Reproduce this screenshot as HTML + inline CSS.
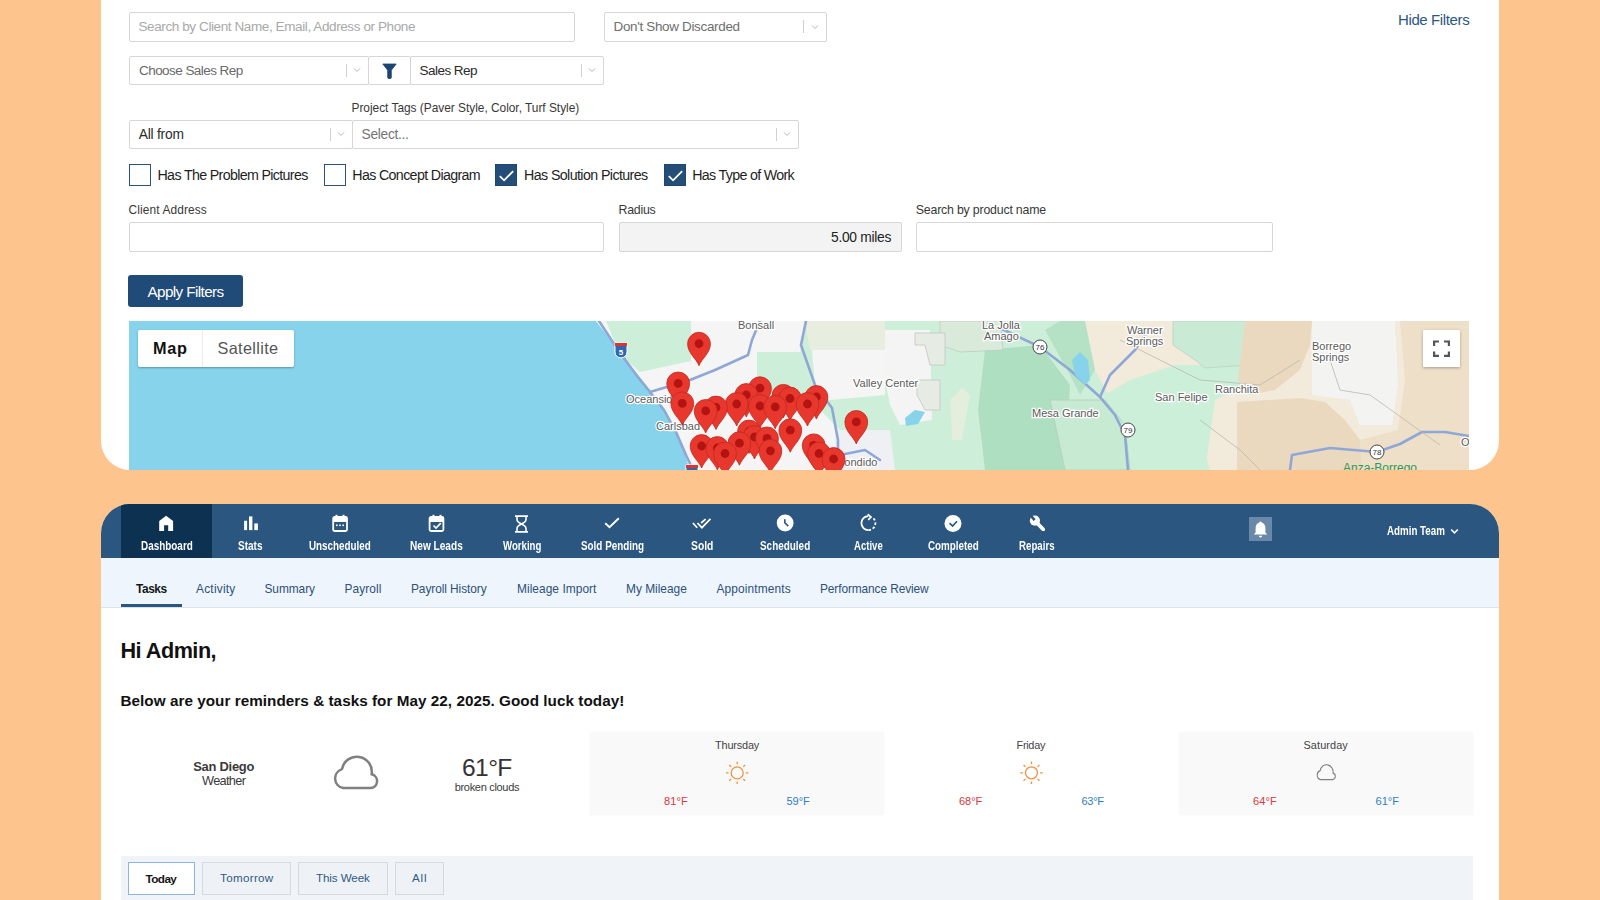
<!DOCTYPE html>
<html><head><meta charset="utf-8"><title>Dashboard</title>
<style>
*{box-sizing:border-box;margin:0;padding:0}
html,body{width:1600px;height:900px;overflow:hidden;background:#FDC48E;font-family:"Liberation Sans",sans-serif}
.a{position:absolute}
.card{position:absolute;background:#fff;overflow:hidden}
.inp{position:absolute;border:1px solid #D6D6D6;background:#fff;border-radius:2px}
.sep{position:absolute;width:1px;background:#D0D0D0}
.cb{position:absolute;width:22px;height:22px;border:1.6px solid #2C5278;background:#fff}
.cb.on{background:#244D78;border-color:#1F4670}
</style></head><body>
<div class="card" style="left:101px;top:-40px;width:1398px;height:510px;border-radius:0 0 29px 29px"></div>
<div class="card" style="left:101px;top:504px;width:1398px;height:440px;border-radius:29px 29px 0 0">
<div class="a" style="left:0;top:0;width:1398px;height:54px;background:#2B5680"></div>
<div class="a" style="left:20px;top:0;width:91px;height:54px;background:#0C3151"></div>
<div class="a" style="left:0;top:54px;width:1398px;height:50px;background:#EEF5FD;border-bottom:1px solid #DAE2EA"></div>
<div class="a" style="left:20px;top:100px;width:61px;height:3px;background:#2B5680"></div>
</div>
<div class="inp" style="left:129px;top:12px;width:446px;height:30px"></div>
<div class="inp" style="left:604px;top:12px;width:223px;height:30px"></div>
<div class="sep" style="left:803px;top:20px;height:13px"></div><svg class="a" style="left:811px;top:24px" width="8" height="6" viewBox="0 0 8 6"><path d="M1 1.5L4 4.5L7 1.5" fill="none" stroke="#B5B5B5" stroke-width="1"/></svg>
<div class="inp" style="left:129px;top:56px;width:240px;height:29px"></div>
<div class="sep" style="left:346px;top:64px;height:13px"></div><svg class="a" style="left:353px;top:67px" width="8" height="6" viewBox="0 0 8 6"><path d="M1 1.5L4 4.5L7 1.5" fill="none" stroke="#B5B5B5" stroke-width="1"/></svg>
<div class="inp" style="left:368px;top:56px;width:43px;height:29px"></div>
<svg class="a" style="left:382px;top:62.5px" width="15" height="16" viewBox="0 0 15 16"><path d="M0.8 1H14.2L9.3 7.2V14.6Q9.3 15.5 8.4 15.5H6.6Q5.7 15.5 5.7 14.6V7.2Z" fill="#1C4574" stroke="#1C4574" stroke-width="0.8" stroke-linejoin="round"/></svg>
<div class="inp" style="left:410px;top:56px;width:194px;height:29px"></div>
<div class="sep" style="left:581px;top:64px;height:13px"></div><svg class="a" style="left:588px;top:67px" width="8" height="6" viewBox="0 0 8 6"><path d="M1 1.5L4 4.5L7 1.5" fill="none" stroke="#B5B5B5" stroke-width="1"/></svg>
<div class="inp" style="left:129px;top:120px;width:224px;height:29px"></div>
<div class="sep" style="left:330px;top:128px;height:13px"></div><svg class="a" style="left:337px;top:131px" width="8" height="6" viewBox="0 0 8 6"><path d="M1 1.5L4 4.5L7 1.5" fill="none" stroke="#B5B5B5" stroke-width="1"/></svg>
<div class="inp" style="left:352px;top:120px;width:447px;height:29px"></div>
<div class="sep" style="left:776px;top:128px;height:13px"></div><svg class="a" style="left:783px;top:131px" width="8" height="6" viewBox="0 0 8 6"><path d="M1 1.5L4 4.5L7 1.5" fill="none" stroke="#B5B5B5" stroke-width="1"/></svg>
<div class="cb" style="left:129px;top:164px"></div>
<div class="cb" style="left:324px;top:164px"></div>
<div class="cb on" style="left:495px;top:164px"><svg width="22" height="22" viewBox="0 0 22 22" style="position:absolute;left:-1.6px;top:-1.6px"><path d="M5.8 13.1L10.1 17.3L19.2 8.1" fill="none" stroke="#fff" stroke-width="1.8"/></svg></div>
<div class="cb on" style="left:664px;top:164px"><svg width="22" height="22" viewBox="0 0 22 22" style="position:absolute;left:-1.6px;top:-1.6px"><path d="M5.8 13.1L10.1 17.3L19.2 8.1" fill="none" stroke="#fff" stroke-width="1.8"/></svg></div>
<div class="inp" style="left:129px;top:222px;width:475px;height:30px"></div>
<div class="inp" style="left:619px;top:222px;width:283px;height:30px;background:#F3F3F3"></div>
<div class="inp" style="left:916px;top:222px;width:357px;height:30px"></div>
<div class="a" style="left:128px;top:275px;width:115px;height:32px;background:#204A78;border-radius:3px"></div>
<div class="a" style="left:129px;top:321px;width:1340px;height:149px;background:#86D3EB;overflow:hidden"><svg width="1340" height="149" viewBox="0 0 1340 149" style="position:absolute;left:0;top:0"><defs><g id="pin"><path d="M12 34C9.5 27 0.6 21.5 0.6 12A11.4 11.4 0 1 1 23.4 12C23.4 21.5 14.5 27 12 34Z" fill="#E8382D" stroke="#C0281F" stroke-width="0.8"/><circle cx="12" cy="12" r="4.4" fill="#B31412"/></g></defs><rect width="1340" height="149" fill="#CDEFD9"/><polygon points="956.0,0.0 1340.0,0.0 1340.0,149.0 1081.0,149.0 1066.0,99.0 1031.0,79.0 981.0,77.0 966.0,49.0" fill="#F2EADB"/><polygon points="971.0,77.0 1001.0,59.0 1046.0,44.0 1116.0,44.0 1116.0,64.0 1086.0,79.0 1076.0,149.0 981.0,149.0" fill="#CBEFD9"/><polygon points="1044.0,0.0 1119.0,0.0 1119.0,44.0 1076.0,47.0 1066.0,39.0 1044.0,24.0" fill="#C9EBD5" stroke="#BFCFC2" stroke-width="0.8"/><polygon points="1116.0,0.0 1183.0,0.0 1181.0,24.0 1171.0,49.0 1146.0,69.0 1121.0,74.0 1109.0,59.0" fill="#EAD9BF"/><polygon points="1108.0,81.0 1171.0,77.0 1196.0,81.0 1216.0,99.0 1231.0,119.0 1233.0,149.0 1108.0,149.0" fill="#EAD9BF"/><polygon points="1271.0,0.0 1340.0,0.0 1340.0,149.0 1233.0,149.0 1231.0,119.0 1269.0,109.0 1276.0,59.0" fill="#EEDFC8"/><polygon points="1183.0,0.0 1266.0,0.0 1269.0,64.0 1263.0,104.0 1231.0,104.0 1221.0,79.0 1183.0,74.0" fill="#F3F3F1"/><polygon points="856.0,29.0 911.0,24.0 941.0,64.0 936.0,149.0 856.0,149.0 849.0,89.0" fill="#AEDFC0"/><polygon points="921.0,79.0 976.0,79.0 996.0,104.0 1001.0,149.0 936.0,149.0" fill="#C6EAD2" stroke="#B9CCBD" stroke-width="0.8"/><polygon points="916.0,9.0 931.0,0.0 956.0,0.0 966.0,49.0 951.0,74.0 941.0,54.0" fill="#B5E2C5"/><polygon points="811.0,0.0 871.0,0.0 874.0,29.0 831.0,31.0 811.0,24.0" fill="#D9E9DA" stroke="#BFCBBF" stroke-width="0.8"/><polygon points="467.0,0.0 485.0,23.0 502.0,45.0 518.0,65.0 531.0,83.0 543.0,103.0 554.0,127.0 561.0,149.0 0.0,149.0 0.0,0.0" fill="#86D3EB"/><polygon points="467.0,0.0 485.0,23.0 502.0,45.0 518.0,65.0 531.0,83.0 543.0,103.0 554.0,127.0 561.0,149.0 706.0,149.0 711.0,109.0 681.0,79.0 628.0,74.0 628.0,31.0 671.0,31.0 676.0,0.0 562.0,0.0 562.0,40.0 511.0,51.0 491.0,34.0 477.0,0.0" fill="#F4F5F4"/><polygon points="676.0,0.0 756.0,0.0 756.0,29.0 681.0,29.0" fill="#E8EEDF"/><polygon points="683.0,29.0 756.0,29.0 756.0,74.0 701.0,79.0 686.0,64.0" fill="#F4F5F4"/><polygon points="756.0,9.0 801.0,9.0 803.0,99.0 771.0,104.0 761.0,84.0 756.0,59.0" fill="#F3F4F3"/><polygon points="706.0,109.0 761.0,109.0 766.0,149.0 706.0,149.0" fill="#EEF0F3"/><polygon points="786.0,12.0 816.0,12.0 816.0,44.0 801.0,44.0 796.0,24.0 786.0,24.0" fill="#E6ECE4" stroke="#C4C4C4" stroke-width="0.8"/><polygon points="788.0,59.0 811.0,59.0 811.0,89.0 796.0,89.0 788.0,74.0" fill="#E6ECE4" stroke="#C4C4C4" stroke-width="0.8"/><polygon points="821.0,79.0 833.0,67.0 841.0,74.0 833.0,119.0 823.0,119.0" fill="#E3EEDC"/><polygon points="776.0,97.0 786.0,89.0 796.0,91.0 789.0,103.0 777.0,105.0" fill="#86D3EB"/><polyline points="470.0,0.0 489.0,29.0 508.0,55.0 521.0,71.0 535.0,89.0 547.0,111.0 557.0,134.0 564.0,149.0" fill="none" stroke="#8FA7D6" stroke-width="2.6" stroke-linejoin="round" stroke-linecap="round"/><polyline points="521.0,71.0 561.0,59.0 586.0,49.0 619.0,34.0 623.0,19.0 631.0,0.0" fill="none" stroke="#8FA7D6" stroke-width="2.6" stroke-linejoin="round" stroke-linecap="round"/><polyline points="677.0,0.0 672.0,24.0 686.0,64.0 703.0,87.0 709.0,119.0 709.0,149.0" fill="none" stroke="#8FA7D6" stroke-width="2.6" stroke-linejoin="round" stroke-linecap="round"/><polyline points="711.0,134.0 736.0,129.0 751.0,139.0" fill="none" stroke="#8FA7D6" stroke-width="2.6" stroke-linejoin="round" stroke-linecap="round"/><polyline points="871.0,7.0 911.0,26.0 941.0,49.0 971.0,76.0 986.0,94.0 996.0,114.0 999.0,149.0" fill="none" stroke="#8FA7D6" stroke-width="2.6" stroke-linejoin="round" stroke-linecap="round"/><polyline points="971.0,76.0 981.0,54.0 1006.0,29.0 1016.0,14.0 1021.0,7.0" fill="none" stroke="#8FA7D6" stroke-width="2.6" stroke-linejoin="round" stroke-linecap="round"/><polyline points="1161.0,149.0 1163.0,134.0 1201.0,127.0 1248.0,131.0 1271.0,123.0 1293.0,111.0 1316.0,111.0 1340.0,115.0" fill="none" stroke="#8FA7D6" stroke-width="2.6" stroke-linejoin="round" stroke-linecap="round"/><polyline points="991.0,19.0 1041.0,44.0 1071.0,59.0 1131.0,64.0 1171.0,39.0" fill="none" stroke="#B9B9B0" stroke-width="0.8"/><polyline points="1071.0,99.0 1111.0,129.0 1131.0,149.0" fill="none" stroke="#B9B9B0" stroke-width="0.8"/><polyline points="1201.0,39.0 1211.0,69.0 1241.0,74.0 1311.0,124.0" fill="none" stroke="#B9B9B0" stroke-width="0.8"/><polygon points="943.0,39.0 951.0,31.0 959.0,39.0 961.0,59.0 956.0,64.0 946.0,54.0" fill="#86D3EB"/><circle cx="911" cy="26" r="7" fill="#fff" stroke="#444" stroke-width="1"/><text x="911" y="29" font-size="8" text-anchor="middle" fill="#333" font-family="Liberation Sans">76</text><circle cx="999" cy="109" r="7" fill="#fff" stroke="#444" stroke-width="1"/><text x="999" y="112" font-size="8" text-anchor="middle" fill="#333" font-family="Liberation Sans">79</text><circle cx="1248" cy="131" r="7" fill="#fff" stroke="#444" stroke-width="1"/><text x="1248" y="134" font-size="8" text-anchor="middle" fill="#333" font-family="Liberation Sans">78</text><path d="M486 22H498V31Q498 36 492 37Q486 36 486 31Z" fill="#3366B0" stroke="#fff" stroke-width="1"/><rect x="486" y="22" width="12" height="3" fill="#D33"/><text x="492" y="34" font-size="8" font-weight="bold" text-anchor="middle" fill="#fff" font-family="Liberation Sans">5</text><path d="M557 144H569V153Q569 158 563 159Q557 158 557 153Z" fill="#3366B0" stroke="#fff" stroke-width="1"/><rect x="557" y="144" width="12" height="3" fill="#D33"/><text x="563" y="156" font-size="8" font-weight="bold" text-anchor="middle" fill="#fff" font-family="Liberation Sans">5</text><text font-family="Liberation Sans" fill="#5B5B5B" font-size="11" stroke="#fff" stroke-width="2.5" paint-order="stroke"><tspan x="609" y="8">Bonsall</tspan><tspan x="497" y="82">Oceanside</tspan><tspan x="527" y="109">Carlsbad</tspan><tspan x="724" y="66">Valley Center</tspan><tspan x="697" y="145">Escondido</tspan><tspan x="853" y="8">La Jolla</tspan><tspan x="855" y="19">Amago</tspan><tspan x="998" y="13">Warner</tspan><tspan x="997" y="24">Springs</tspan><tspan x="903" y="96">Mesa Grande</tspan><tspan x="1026" y="80">San Felipe</tspan><tspan x="1086" y="72">Ranchita</tspan><tspan x="1183" y="29">Borrego</tspan><tspan x="1183" y="40">Springs</tspan><tspan x="1332" y="125">O</tspan></text><text x="1214" y="151" font-family="Liberation Sans" font-size="12" fill="#2E9A58">Anza-Borrego</text><use href="#pin" x="558.0" y="10.7"/><use href="#pin" x="537.2" y="50.4"/><use href="#pin" x="619.0" y="55.2"/><use href="#pin" x="605.3" y="62.0"/><use href="#pin" x="642.4" y="62.8"/><use href="#pin" x="675.4" y="64.0"/><use href="#pin" x="649.0" y="65.5"/><use href="#pin" x="541.3" y="70.3"/><use href="#pin" x="595.7" y="71.0"/><use href="#pin" x="666.5" y="71.0"/><use href="#pin" x="619.0" y="73.0"/><use href="#pin" x="634.2" y="73.8"/><use href="#pin" x="575.0" y="74.5"/><use href="#pin" x="564.7" y="77.9"/><use href="#pin" x="715.3" y="88.9"/><use href="#pin" x="649.3" y="97.2"/><use href="#pin" x="608.0" y="98.5"/><use href="#pin" x="613.5" y="104.0"/><use href="#pin" x="626.0" y="105.4"/><use href="#pin" x="598.4" y="110.2"/><use href="#pin" x="672.7" y="112.3"/><use href="#pin" x="560.6" y="113.0"/><use href="#pin" x="576.4" y="115.0"/><use href="#pin" x="629.4" y="117.8"/><use href="#pin" x="584.0" y="120.5"/><use href="#pin" x="678.0" y="120.5"/><use href="#pin" x="692.6" y="126.0"/><rect x="1294" y="9" width="37" height="37" rx="1" fill="#fff" style="filter:drop-shadow(0 1px 1.5px rgba(0,0,0,.3))"/><path d="M1305.1 25V20.5H1310 M1315 20.5H1319.9V25 M1319.9 30.5V34.9H1315 M1310 34.9H1305.1V30.5" fill="none" stroke="#555" stroke-width="2.2"/></svg><div style="position:absolute;left:9px;top:9px;width:156px;height:37px;background:#fff;box-shadow:0 1px 2px rgba(0,0,0,.3);border-radius:2px"><div style="position:absolute;left:64px;top:0;width:1px;height:37px;background:#EBEBEB"></div></div></div>
<svg class="a" style="left:159px;top:515px" width="15" height="16" viewBox="0 0 15 16"><path d="M7.1 0.7L14.1 5.9V16H9.2V10.3H5.1V16H0.2V5.9Z" fill="#fff"/></svg>
<svg class="a" style="left:243px;top:515px" width="16" height="16" viewBox="0 0 16 16"><rect x="1.1" y="5.75" width="3" height="9.35" fill="#fff"/><rect x="6" y="1.4" width="3.4" height="13.7" fill="#fff"/><rect x="11.3" y="8.4" width="3.6" height="6.7" fill="#fff"/></svg>
<svg class="a" style="left:331px;top:514px" width="18" height="18" viewBox="0 0 18 18"><rect x="2.2" y="3" width="13.8" height="14" rx="1.5" fill="none" stroke="#fff" stroke-width="1.8"/><rect x="2.2" y="3" width="13.8" height="5" fill="#fff"/><rect x="4.5" y="0.8" width="2" height="3.5" fill="#fff"/><rect x="11.5" y="0.8" width="2" height="3.5" fill="#fff"/><rect x="5" y="10.5" width="1.6" height="1.6" fill="#fff"/><rect x="8.2" y="10.5" width="1.6" height="1.6" fill="#fff"/><rect x="11.4" y="10.5" width="1.6" height="1.6" fill="#fff"/></svg>
<svg class="a" style="left:428px;top:514px" width="18" height="18" viewBox="0 0 18 18"><rect x="1.6" y="3" width="13.8" height="14" rx="1.5" fill="none" stroke="#fff" stroke-width="1.8"/><rect x="1.6" y="3" width="13.8" height="5" fill="#fff"/><rect x="4.5" y="0.8" width="2" height="3.5" fill="#fff"/><rect x="11.5" y="0.8" width="2" height="3.5" fill="#fff"/><path d="M5.5 11.5L8 14L12.8 9.2" fill="none" stroke="#fff" stroke-width="1.7"/></svg>
<svg class="a" style="left:514px;top:515px" width="15" height="18" viewBox="0 0 15 18"><path d="M1 1.2H14M1 16.8H14" stroke="#fff" stroke-width="1.8"/><path d="M3 1.5V4.5Q3 7 7.5 9Q12 11 12 13.5V16.5M12 1.5V4.5Q12 7 7.5 9Q3 11 3 13.5V16.5" fill="none" stroke="#fff" stroke-width="1.6"/></svg>
<svg class="a" style="left:604px;top:517px" width="16" height="12" viewBox="0 0 16 12"><path d="M1.2 6.2L5.5 10.3L14.8 1.2" fill="none" stroke="#fff" stroke-width="1.9"/></svg>
<svg class="a" style="left:692px;top:517px" width="20" height="12" viewBox="0 0 20 12"><path d="M0.9 6L5.2 10.7M5.4 6L9.9 10.7L18.5 1.9M9.1 6L13.6 2.1" fill="none" stroke="#fff" stroke-width="1.7"/></svg>
<svg class="a" style="left:776px;top:514px" width="18" height="18" viewBox="0 0 18 18"><circle cx="9.15" cy="9" r="8.4" fill="#fff"/><path d="M8.8 5.2V8.7L12.3 12.1" fill="none" stroke="#2B5680" stroke-width="1.6"/></svg>
<svg class="a" style="left:860px;top:513px" width="18" height="20" viewBox="0 0 18 20"><path d="M8.4 3.1A7 7 0 0 0 8.4 17.1" fill="none" stroke="#fff" stroke-width="1.8"/><path d="M8.4 17.1A7 7 0 0 0 13.35 5.15" fill="none" stroke="#fff" stroke-width="1.8" stroke-dasharray="2.6 1.9"/><path d="M7.7 1.2L11 4.1L8.2 6.8" fill="none" stroke="#fff" stroke-width="1.7"/></svg>
<svg class="a" style="left:944px;top:514px" width="18" height="18" viewBox="0 0 18 18"><circle cx="9" cy="9.4" r="8.5" fill="#fff"/><path d="M5.6 9.2L8.6 12.1L13 7.2" fill="none" stroke="#2B5680" stroke-width="1.7"/></svg>
<svg class="a" style="left:1028px;top:514px" width="18" height="18" viewBox="0 0 18 18"><defs><mask id="wm"><rect width="18" height="18" fill="#fff"/><path d="M2.8 1.6L6.6 6.1" stroke="#000" stroke-width="2.6"/></mask></defs><g mask="url(#wm)" fill="#fff"><circle cx="6.9" cy="6.7" r="5.1"/><path d="M6.9 6.7L15.3 15.5" stroke="#fff" stroke-width="3.8" stroke-linecap="round"/></g></svg>
<div class="a" style="left:1249px;top:517px;width:23px;height:24px;background:#6A89A9"></div>
<svg class="a" style="left:1253px;top:521px" width="15" height="17" viewBox="0 0 15 17"><path d="M7.5 0.5Q8.6 0.5 8.6 1.6Q12.4 2.6 12.4 7.5V11.6L14.2 13.6H0.8L2.6 11.6V7.5Q2.6 2.6 6.4 1.6Q6.4 0.5 7.5 0.5Z" fill="#fff"/><path d="M5.8 14.8H9.2Q9 16.6 7.5 16.6Q6 16.6 5.8 14.8Z" fill="#fff"/></svg>
<svg class="a" style="left:1450px;top:528px" width="9" height="7" viewBox="0 0 9 7"><path d="M1.2 1.5L4.5 4.8L7.8 1.5" fill="none" stroke="#fff" stroke-width="1.6"/></svg>
<svg class="a" style="left:330px;top:755px" width="50" height="36" viewBox="0 0 50 36"><path d="M13.2 33.1A9.8 9.8 0 0 1 12 14.1A15 15 0 0 1 41.6 19.3A7 7 0 0 1 40.7 33.1Z" fill="none" stroke="#808080" stroke-width="2.5" stroke-linejoin="round"/></svg>
<div class="a" style="left:590px;top:732px;width:294px;height:83px;background:#F9F9F9;box-shadow:0 0 2px rgba(0,0,0,0.03)"></div>
<div class="a" style="left:1179px;top:732px;width:294px;height:83px;background:#F9F9F9;box-shadow:0 0 2px rgba(0,0,0,0.03)"></div>
<svg class="a" style="left:0;top:0;overflow:visible" width="1" height="1"><circle cx="737.2" cy="772.9" r="6" fill="none" stroke="#F0913F" stroke-width="1.3"/><path d="M745.80 772.90L748.40 772.90M743.28 778.98L745.12 780.82M737.20 781.50L737.20 784.10M731.12 778.98L729.28 780.82M728.60 772.90L726.00 772.90M731.12 766.82L729.28 764.98M737.20 764.30L737.20 761.70M743.28 766.82L745.12 764.98" stroke="#F0913F" stroke-width="1.3"/></svg>
<svg class="a" style="left:0;top:0;overflow:visible" width="1" height="1"><circle cx="1031.5" cy="772.8" r="6" fill="none" stroke="#F0913F" stroke-width="1.3"/><path d="M1040.10 772.80L1042.70 772.80M1037.58 778.88L1039.42 780.72M1031.50 781.40L1031.50 784.00M1025.42 778.88L1023.58 780.72M1022.90 772.80L1020.30 772.80M1025.42 766.72L1023.58 764.88M1031.50 764.20L1031.50 761.60M1037.58 766.72L1039.42 764.88" stroke="#F0913F" stroke-width="1.3"/></svg>
<svg class="a" style="left:1315px;top:763.6px" width="21.6" height="17" viewBox="0 0 50 36" preserveAspectRatio="none"><path d="M13.2 33.1A9.8 9.8 0 0 1 12 14.1A15 15 0 0 1 41.6 19.3A7 7 0 0 1 40.7 33.1Z" fill="none" stroke="#808080" stroke-width="2.4" stroke-linejoin="round"/></svg>
<div class="a" style="left:121px;top:856px;width:1352px;height:60px;background:#F0F4F8"></div>
<div class="a" style="left:128px;top:862px;width:67px;height:33px;background:#FFFFFF;border:1px solid #8FB3DF"></div>
<div class="a" style="left:201.5px;top:862px;width:89px;height:33px;background:#EEF2F6;border:1px solid #D3DAE2"></div>
<div class="a" style="left:298px;top:862px;width:90px;height:33px;background:#EEF2F6;border:1px solid #D3DAE2"></div>
<div class="a" style="left:395px;top:862px;width:49px;height:33px;background:#EEF2F6;border:1px solid #D3DAE2"></div>
<div style="position:absolute;left:138.50px;top:20.35px;font-size:13.52px;line-height:13.52px;font-weight:400;white-space:nowrap;z-index:5;color:#A9A9A9;letter-spacing:-0.407px;">Search by Client Name, Email, Address or Phone</div>
<div style="position:absolute;left:613.50px;top:20.42px;font-size:13.44px;line-height:13.44px;font-weight:400;white-space:nowrap;z-index:5;color:#6E6E6E;letter-spacing:-0.316px;">Don't Show Discarded</div>
<div style="position:absolute;left:139.00px;top:63.77px;font-size:13.52px;line-height:13.52px;font-weight:400;white-space:nowrap;z-index:5;color:#6A6A6A;letter-spacing:-0.561px;">Choose Sales Rep</div>
<div style="position:absolute;left:419.50px;top:63.77px;font-size:13.52px;line-height:13.52px;font-weight:400;white-space:nowrap;z-index:5;color:#2A2A2A;letter-spacing:-0.535px;">Sales Rep</div>
<div style="position:absolute;left:351.50px;top:102.95px;font-size:11.92px;line-height:11.92px;font-weight:400;white-space:nowrap;z-index:5;color:#383838;letter-spacing:-0.022px;">Project Tags (Paver Style, Color, Turf Style)</div>
<div style="position:absolute;left:138.75px;top:127.81px;font-size:13.81px;line-height:13.81px;font-weight:400;white-space:nowrap;z-index:5;color:#2A2A2A;letter-spacing:-0.229px;">All from</div>
<div style="position:absolute;left:361.50px;top:127.81px;font-size:13.81px;line-height:13.81px;font-weight:400;white-space:nowrap;z-index:5;color:#757575;letter-spacing:-0.300px;">Select...</div>
<div style="position:absolute;left:157.50px;top:167.90px;font-size:14.24px;line-height:14.24px;font-weight:400;white-space:nowrap;z-index:5;color:#1E1E1E;letter-spacing:-0.655px;">Has The Problem Pictures</div>
<div style="position:absolute;left:352.25px;top:167.90px;font-size:14.24px;line-height:14.24px;font-weight:400;white-space:nowrap;z-index:5;color:#1E1E1E;letter-spacing:-0.643px;">Has Concept Diagram</div>
<div style="position:absolute;left:524.00px;top:167.90px;font-size:14.24px;line-height:14.24px;font-weight:400;white-space:nowrap;z-index:5;color:#1E1E1E;letter-spacing:-0.595px;">Has Solution Pictures</div>
<div style="position:absolute;left:692.25px;top:167.90px;font-size:14.24px;line-height:14.24px;font-weight:400;white-space:nowrap;z-index:5;color:#1E1E1E;letter-spacing:-0.686px;">Has Type of Work</div>
<div style="position:absolute;left:128.50px;top:204.95px;font-size:11.92px;line-height:11.92px;font-weight:400;white-space:nowrap;z-index:5;color:#383838;letter-spacing:0.118px;">Client Address</div>
<div style="position:absolute;left:618.50px;top:203.98px;font-size:12.35px;line-height:12.35px;font-weight:400;white-space:nowrap;z-index:5;color:#383838;letter-spacing:-0.246px;">Radius</div>
<div style="position:absolute;left:831.00px;top:230.81px;font-size:13.81px;line-height:13.81px;font-weight:400;white-space:nowrap;z-index:5;color:#222;letter-spacing:-0.288px;">5.00 miles</div>
<div style="position:absolute;left:915.75px;top:203.98px;font-size:12.35px;line-height:12.35px;font-weight:400;white-space:nowrap;z-index:5;color:#383838;letter-spacing:-0.194px;">Search by product name</div>
<div style="position:absolute;left:147.50px;top:283.63px;font-size:15.26px;line-height:15.26px;font-weight:400;white-space:nowrap;z-index:5;color:#FFFFFF;letter-spacing:-0.601px;">Apply Filters</div>
<div style="position:absolute;left:1398.00px;top:12.98px;font-size:14.97px;line-height:14.97px;font-weight:400;white-space:nowrap;z-index:5;color:#2B5785;letter-spacing:-0.370px;">Hide Filters</div>
<div style="position:absolute;left:153.00px;top:340.00px;font-size:16.28px;line-height:16.28px;font-weight:700;white-space:nowrap;z-index:5;color:#111;letter-spacing:0.673px;">Map</div>
<div style="position:absolute;left:217.50px;top:339.60px;font-size:16.28px;line-height:16.28px;font-weight:400;white-space:nowrap;z-index:5;color:#565656;letter-spacing:0.348px;">Satellite</div>
<div style="position:absolute;left:140.50px;top:539.34px;font-size:13.37px;line-height:13.37px;font-weight:700;white-space:nowrap;z-index:5;color:#FFFFFF;transform-origin:0 0;transform:scaleX(0.7424);letter-spacing:0.000px;">Dashboard</div>
<div style="position:absolute;left:237.50px;top:539.34px;font-size:13.37px;line-height:13.37px;font-weight:700;white-space:nowrap;z-index:5;color:#FFFFFF;transform-origin:0 0;transform:scaleX(0.7489);letter-spacing:0.000px;">Stats</div>
<div style="position:absolute;left:309.00px;top:539.34px;font-size:13.37px;line-height:13.37px;font-weight:700;white-space:nowrap;z-index:5;color:#FFFFFF;transform-origin:0 0;transform:scaleX(0.7362);letter-spacing:0.000px;">Unscheduled</div>
<div style="position:absolute;left:410.00px;top:539.34px;font-size:13.37px;line-height:13.37px;font-weight:700;white-space:nowrap;z-index:5;color:#FFFFFF;transform-origin:0 0;transform:scaleX(0.7561);letter-spacing:0.000px;">New Leads</div>
<div style="position:absolute;left:503.00px;top:539.34px;font-size:13.37px;line-height:13.37px;font-weight:700;white-space:nowrap;z-index:5;color:#FFFFFF;transform-origin:0 0;transform:scaleX(0.7213);letter-spacing:0.000px;">Working</div>
<div style="position:absolute;left:580.50px;top:539.34px;font-size:13.37px;line-height:13.37px;font-weight:700;white-space:nowrap;z-index:5;color:#FFFFFF;transform-origin:0 0;transform:scaleX(0.7390);letter-spacing:0.000px;">Sold Pending</div>
<div style="position:absolute;left:690.50px;top:539.34px;font-size:13.37px;line-height:13.37px;font-weight:700;white-space:nowrap;z-index:5;color:#FFFFFF;transform-origin:0 0;transform:scaleX(0.7722);letter-spacing:0.000px;">Sold</div>
<div style="position:absolute;left:760.00px;top:539.34px;font-size:13.37px;line-height:13.37px;font-weight:700;white-space:nowrap;z-index:5;color:#FFFFFF;transform-origin:0 0;transform:scaleX(0.7430);letter-spacing:0.000px;">Scheduled</div>
<div style="position:absolute;left:854.00px;top:539.34px;font-size:13.37px;line-height:13.37px;font-weight:700;white-space:nowrap;z-index:5;color:#FFFFFF;transform-origin:0 0;transform:scaleX(0.7159);letter-spacing:0.000px;">Active</div>
<div style="position:absolute;left:927.50px;top:539.34px;font-size:13.37px;line-height:13.37px;font-weight:700;white-space:nowrap;z-index:5;color:#FFFFFF;transform-origin:0 0;transform:scaleX(0.7348);letter-spacing:0.000px;">Completed</div>
<div style="position:absolute;left:1019.00px;top:539.34px;font-size:13.37px;line-height:13.37px;font-weight:700;white-space:nowrap;z-index:5;color:#FFFFFF;transform-origin:0 0;transform:scaleX(0.7252);letter-spacing:0.000px;">Repairs</div>
<div style="position:absolute;left:1387.00px;top:523.92px;font-size:13.08px;line-height:13.08px;font-weight:700;white-space:nowrap;z-index:5;color:#FFFFFF;transform-origin:0 0;transform:scaleX(0.7466);letter-spacing:0.000px;">Admin Team</div>
<div style="position:absolute;left:136.00px;top:584.30px;font-size:11.92px;line-height:11.92px;font-weight:700;white-space:nowrap;z-index:5;color:#151515;letter-spacing:-0.420px;">Tasks</div>
<div style="position:absolute;left:196.00px;top:584.30px;font-size:11.92px;line-height:11.92px;font-weight:400;white-space:nowrap;z-index:5;color:#2D5179;letter-spacing:0.227px;">Activity</div>
<div style="position:absolute;left:264.50px;top:584.30px;font-size:11.92px;line-height:11.92px;font-weight:400;white-space:nowrap;z-index:5;color:#2D5179;letter-spacing:-0.076px;">Summary</div>
<div style="position:absolute;left:344.50px;top:584.30px;font-size:11.92px;line-height:11.92px;font-weight:400;white-space:nowrap;z-index:5;color:#2D5179;letter-spacing:0.088px;">Payroll</div>
<div style="position:absolute;left:411.00px;top:584.30px;font-size:11.92px;line-height:11.92px;font-weight:400;white-space:nowrap;z-index:5;color:#2D5179;letter-spacing:-0.079px;">Payroll History</div>
<div style="position:absolute;left:517.00px;top:584.30px;font-size:11.92px;line-height:11.92px;font-weight:400;white-space:nowrap;z-index:5;color:#2D5179;letter-spacing:0.048px;">Mileage Import</div>
<div style="position:absolute;left:626.00px;top:584.30px;font-size:11.92px;line-height:11.92px;font-weight:400;white-space:nowrap;z-index:5;color:#2D5179;letter-spacing:-0.014px;">My Mileage</div>
<div style="position:absolute;left:716.50px;top:584.30px;font-size:11.92px;line-height:11.92px;font-weight:400;white-space:nowrap;z-index:5;color:#2D5179;letter-spacing:0.124px;">Appointments</div>
<div style="position:absolute;left:820.00px;top:584.30px;font-size:11.92px;line-height:11.92px;font-weight:400;white-space:nowrap;z-index:5;color:#2D5179;letter-spacing:-0.107px;">Performance Review</div>
<div style="position:absolute;left:120.50px;top:640.11px;font-size:21.63px;line-height:21.63px;font-weight:700;white-space:nowrap;z-index:5;color:#111;letter-spacing:-0.502px;">Hi Admin,</div>
<div style="position:absolute;left:120.50px;top:693.44px;font-size:15.26px;line-height:15.26px;font-weight:700;white-space:nowrap;z-index:5;color:#111;letter-spacing:0.044px;">Below are your reminders &amp; tasks for May 22, 2025. Good luck today!</div>
<div style="position:absolute;left:193.25px;top:760.73px;font-size:12.94px;line-height:12.94px;font-weight:700;white-space:nowrap;z-index:5;color:#3A3A3A;letter-spacing:-0.271px;">San Diego</div>
<div style="position:absolute;left:202.00px;top:774.78px;font-size:12.72px;line-height:12.72px;font-weight:400;white-space:nowrap;z-index:5;color:#3A3A3A;letter-spacing:-0.649px;">Weather</div>
<div style="position:absolute;left:462.00px;top:756.14px;font-size:24.58px;line-height:24.58px;font-weight:400;white-space:nowrap;z-index:5;color:#333;letter-spacing:-0.601px;">61°F</div>
<div style="position:absolute;left:454.70px;top:782.43px;font-size:11.03px;line-height:11.03px;font-weight:400;white-space:nowrap;z-index:5;color:#3A3A3A;letter-spacing:-0.314px;">broken clouds</div>
<div style="position:absolute;left:715.00px;top:740.21px;font-size:10.90px;line-height:10.90px;font-weight:400;white-space:nowrap;z-index:5;color:#444;letter-spacing:-0.158px;">Thursday</div>
<div style="position:absolute;left:1016.50px;top:740.21px;font-size:10.90px;line-height:10.90px;font-weight:400;white-space:nowrap;z-index:5;color:#444;letter-spacing:-0.277px;">Friday</div>
<div style="position:absolute;left:1303.50px;top:740.21px;font-size:10.90px;line-height:10.90px;font-weight:400;white-space:nowrap;z-index:5;color:#444;letter-spacing:0.102px;">Saturday</div>
<div style="position:absolute;left:664.00px;top:795.61px;font-size:11.05px;line-height:11.05px;font-weight:400;white-space:nowrap;z-index:5;color:#D83A3C;letter-spacing:0.095px;">81°F</div>
<div style="position:absolute;left:786.50px;top:795.51px;font-size:11.05px;line-height:11.05px;font-weight:400;white-space:nowrap;z-index:5;color:#2F7EC2;letter-spacing:-0.049px;">59°F</div>
<div style="position:absolute;left:959.00px;top:795.51px;font-size:11.05px;line-height:11.05px;font-weight:400;white-space:nowrap;z-index:5;color:#D83A3C;letter-spacing:-0.058px;">68°F</div>
<div style="position:absolute;left:1081.50px;top:795.51px;font-size:11.05px;line-height:11.05px;font-weight:400;white-space:nowrap;z-index:5;color:#2F7EC2;letter-spacing:-0.297px;">63°F</div>
<div style="position:absolute;left:1253.00px;top:795.51px;font-size:11.05px;line-height:11.05px;font-weight:400;white-space:nowrap;z-index:5;color:#D83A3C;letter-spacing:0.114px;">64°F</div>
<div style="position:absolute;left:1375.50px;top:795.61px;font-size:11.05px;line-height:11.05px;font-weight:400;white-space:nowrap;z-index:5;color:#2F7EC2;letter-spacing:0.025px;">61°F</div>
<div style="position:absolute;left:145.60px;top:872.75px;font-size:11.76px;line-height:11.76px;font-weight:700;white-space:nowrap;z-index:5;color:#151515;letter-spacing:-0.615px;">Today</div>
<div style="position:absolute;left:220.00px;top:872.47px;font-size:11.63px;line-height:11.63px;font-weight:400;white-space:nowrap;z-index:5;color:#2F5A85;letter-spacing:0.319px;">Tomorrow</div>
<div style="position:absolute;left:316.00px;top:872.47px;font-size:11.63px;line-height:11.63px;font-weight:400;white-space:nowrap;z-index:5;color:#2F5A85;letter-spacing:-0.101px;">This Week</div>
<div style="position:absolute;left:412.00px;top:872.47px;font-size:11.63px;line-height:11.63px;font-weight:400;white-space:nowrap;z-index:5;color:#2F5A85;letter-spacing:0.788px;">All</div>
</body></html>
